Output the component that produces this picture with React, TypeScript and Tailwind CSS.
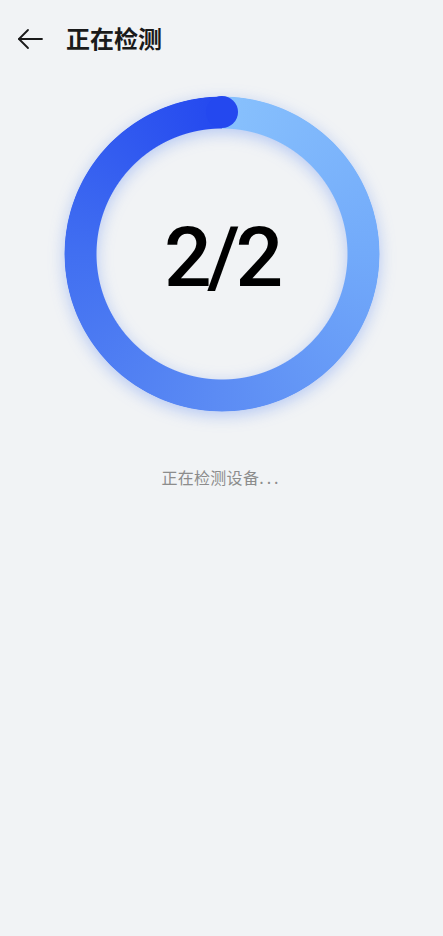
import React from "react";

export default function App() {
  return (
    <div
      className="w-[443px] h-[936px] bg-[#f1f3f5] flex flex-col"
      style={{ fontFamily: '"Noto Sans", "Noto Sans CJK SC", sans-serif' }}
    >
      <div className="h-[80px] flex items-center pl-[16px]">
        <svg width="28" height="24" viewBox="0 0 28 24" fill="none" className="mb-[2px]">
          <path d="M3 12 H26" stroke="#1a1a1a" strokeWidth="1.8" strokeLinecap="round" />
          <path d="M12 3 L3 12 L12 21" stroke="#1a1a1a" strokeWidth="1.8" strokeLinecap="round" strokeLinejoin="round" />
        </svg>
        <div className="ml-[22px] mb-[4px] text-[24px] font-semibold text-[#1a1a1a] leading-none [font-family:'Noto_Sans_CJK_SC',sans-serif]">
          正在检测
        </div>
      </div>

      <div className="mt-[16px] mx-auto w-[316px] h-[316px] relative">
        <div className="absolute inset-0 [filter:drop-shadow(0_4px_8px_rgba(70,120,240,0.35))]">
          <div className="absolute inset-0 rounded-full bg-[conic-gradient(from_0deg,#88c1fd_0deg,#72aafa_90deg,#5c8cf4_180deg,#416ff1_270deg,#2448ef_360deg)] [mask:radial-gradient(circle,transparent_125px,#000_126px,#000_157px,transparent_158px)]" />
          <div className="absolute left-[142px] top-0 w-[32px] h-[32px] rounded-full bg-[#2448ef]" />
        </div>
        <div className="absolute inset-0 flex items-center justify-center">
          <span className="text-[84px] font-medium leading-none tracking-[-4.5px] text-black mt-[8px] [font-family:Roboto,sans-serif]">2/2</span>
        </div>
      </div>

      <div className="mt-[55px] text-center text-[16px] leading-[20px] text-[#8c8c8c] tracking-[0.3px] [font-family:'Noto_Sans_CJK_SC',sans-serif]">
        正在检测设备<span className="tracking-[3px]">...</span>
      </div>
    </div>
  );
}
